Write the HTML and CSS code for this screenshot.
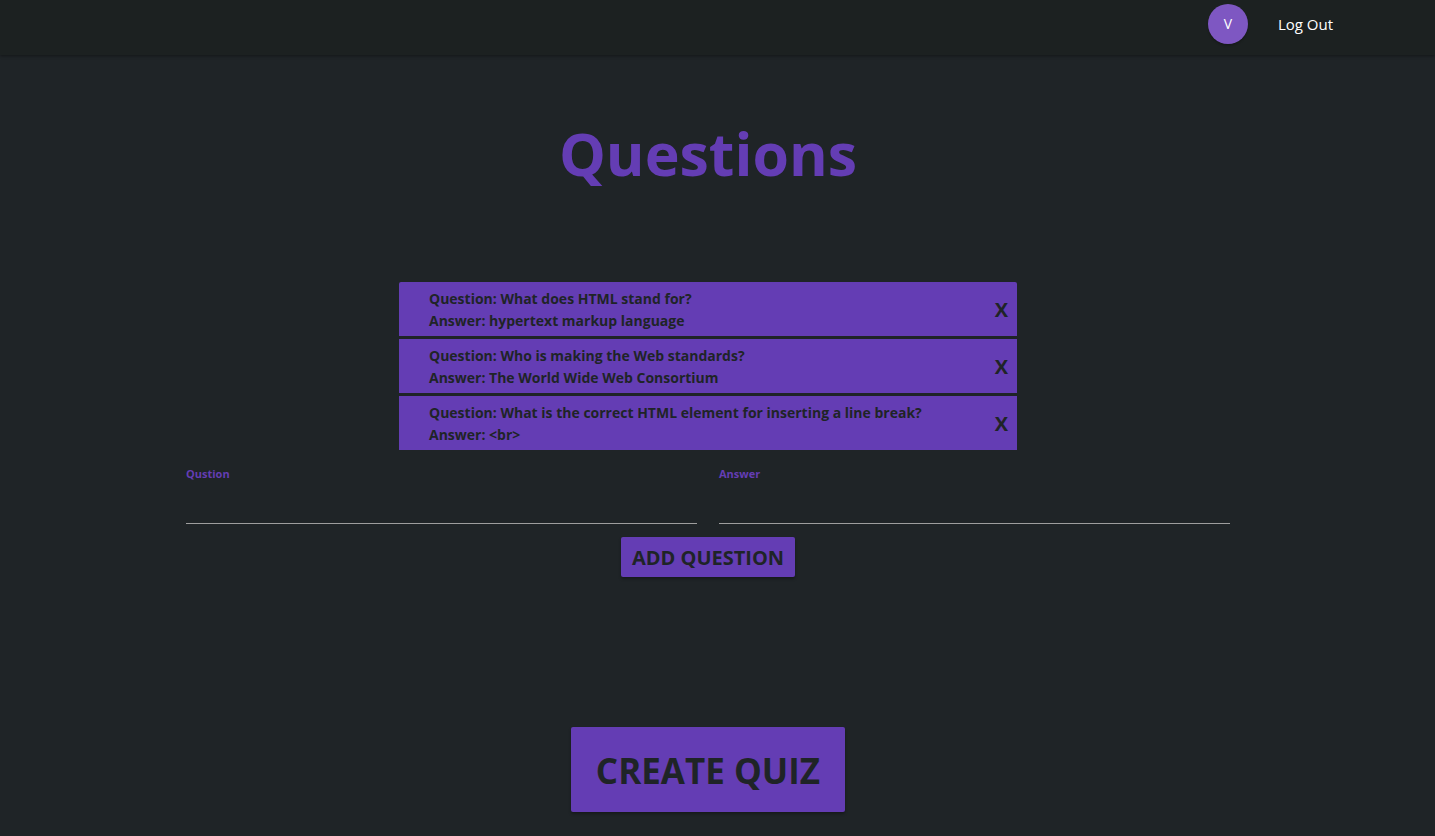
FILE: index.html
```html
<!DOCTYPE html>
<html lang="en">
<head>
<meta charset="utf-8">
<meta name="viewport" content="width=device-width, initial-scale=1">
<title>Questions</title>
<link rel="stylesheet" href="styles.css">
</head>
<body>
<header class="navbar">
  <nav class="nav-links">
    <a class="avatar" href="#">V</a>
    <a class="nav-link" href="#">Log Out</a>
  </nav>
</header>
<main class="page">
  <h1 class="title">Questions</h1>
  <ul class="collection">
    <li class="item">
      <div><p>Question: What does HTML stand for?</p><p>Answer: hypertext markup language</p></div>
      <button class="remove" type="button">X</button>
    </li>
    <li class="item">
      <div><p>Question: Who is making the Web standards?</p><p>Answer: The World Wide Web Consortium</p></div>
      <button class="remove" type="button">X</button>
    </li>
    <li class="item">
      <div><p>Question: What is the correct HTML element for inserting a line break?</p><p>Answer: &lt;br&gt;</p></div>
      <button class="remove" type="button">X</button>
    </li>
  </ul>
  <form class="form">
    <div class="fields">
      <div class="field">
        <label for="question">Qustion</label>
        <input id="question" type="text">
      </div>
      <div class="field">
        <label for="answer">Answer</label>
        <input id="answer" type="text">
      </div>
    </div>
    <button class="btn" type="button">ADD QUESTION</button>
    <button class="btn btn-large" type="submit">CREATE QUIZ</button>
  </form>
</main>
</body>
</html>
```
FILE: styles.css
```css
:root {
  --bg: #1f2427;
  --purple: #643db4;
}
* { box-sizing: border-box; }
body {
  margin: 0;
  min-height: 100vh;
  background: var(--bg);
  color: var(--bg);
  font-family: "Segoe UI", "Open Sans", "Noto Sans", sans-serif;
  font-size: 14px;
  line-height: 22px;
}
h1, p, ul { margin: 0; padding: 0; }
.navbar {
  background: #1c2121;
  padding: 4px 102px 11px;
  box-shadow: 0 1px 3px rgba(0, 0, 0, 0.4);
}
.nav-links {
  display: flex;
  justify-content: flex-end;
  align-items: center;
  gap: 30px;
}
.nav-link, .avatar { color: #fff; text-decoration: none; }
.nav-link { font-size: 15px; }
.avatar {
  width: 40px;
  height: 40px;
  border-radius: 50%;
  background: #7e57c2;
  line-height: 40px;
  text-align: center;
  box-shadow: 0 2px 2px rgba(0, 0, 0, 0.2);
}
.page {
  display: flex;
  flex-direction: column;
  align-items: center;
  padding: 60px 19px 24px 0;
}
.title {
  color: var(--purple);
  font-size: 59px;
  line-height: 76px;
  font-weight: 700;
}
.collection {
  width: 618px;
  max-width: 100%;
  margin-top: 91px;
  list-style: none;
  display: grid;
  gap: 3px;
  font-weight: 700;
}
.item {
  display: flex;
  justify-content: space-between;
  align-items: center;
  padding: 6px 8px 4px 30px;
  background: var(--purple);
}
.item:first-child { border-radius: 2px 2px 0 0; }
.remove {
  border: 0;
  padding: 0 1px;
  background: none;
  color: inherit;
  font: inherit;
  font-size: 20px;
}
.form {
  width: 75%;
  display: flex;
  flex-direction: column;
  align-items: center;
}
.fields {
  width: 100%;
  display: flex;
  gap: 22px;
  padding: 13px 9px;
}
.field { flex: 1; }
.field label {
  display: block;
  color: var(--purple);
  font-size: 11px;
  font-weight: 700;
}
.field input {
  display: block;
  width: 100%;
  height: 39px;
  padding: 0;
  border: 0;
  border-bottom: 1px solid #9e9e9e;
  background: none;
  color: #fff;
  font: inherit;
  outline: none;
}
.btn {
  border: 0;
  border-radius: 2px;
  padding: 1px 11px 0;
  background: var(--purple);
  color: inherit;
  font: inherit;
  font-size: 20px;
  font-weight: 700;
  line-height: 39px;
  box-shadow: 0 2px 3px rgba(0, 0, 0, 0.3);
}
.btn-large {
  margin-top: 150px;
  padding: 2px 25px 0;
  font-size: 35px;
  line-height: 83px;
}
```
